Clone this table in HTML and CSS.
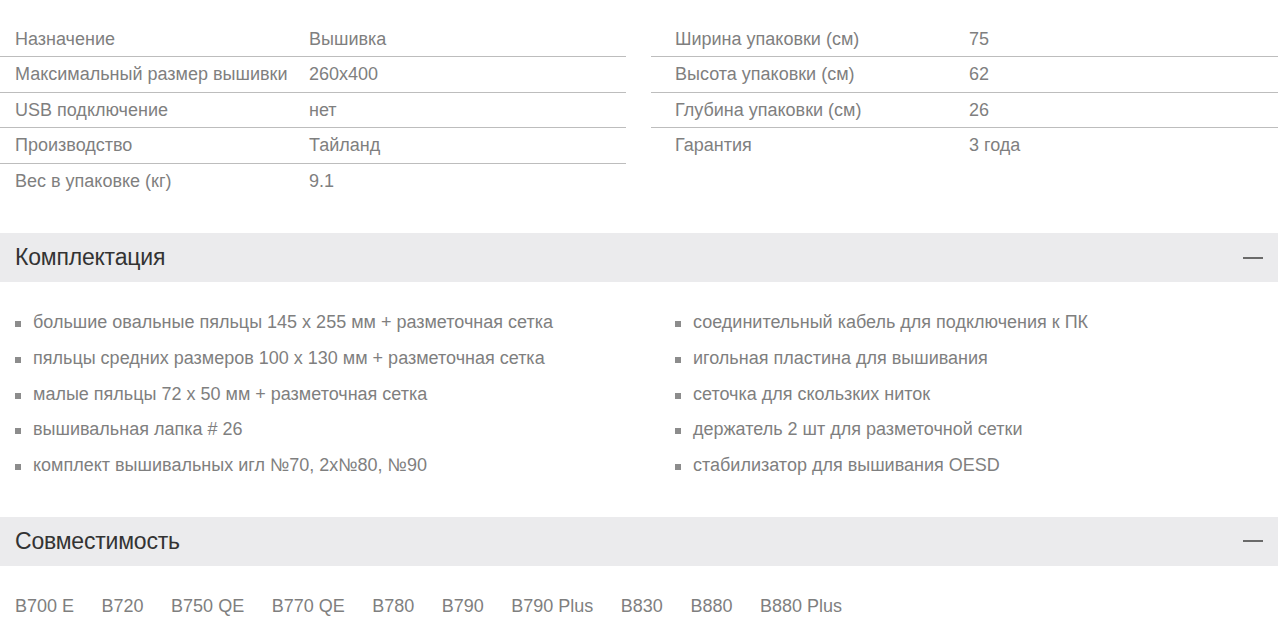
FILE: index.html
```html
<!DOCTYPE html>
<html lang="ru">
<head>
<meta charset="utf-8">
<title>Характеристики</title>
<link rel="stylesheet" href="styles.css">
</head>
<body>
<div class="specs">
  <div class="spec-table spec-left">
    <div class="row"><span class="label">Назначение</span><span class="value">Вышивка</span></div>
    <div class="row"><span class="label">Максимальный размер вышивки</span><span class="value">260x400</span></div>
    <div class="row"><span class="label">USB подключение</span><span class="value">нет</span></div>
    <div class="row"><span class="label">Производство</span><span class="value">Тайланд</span></div>
    <div class="row"><span class="label">Вес в упаковке (кг)</span><span class="value">9.1</span></div>
  </div>
  <div class="spec-table spec-right">
    <div class="row"><span class="label">Ширина упаковки (см)</span><span class="value">75</span></div>
    <div class="row"><span class="label">Высота упаковки (см)</span><span class="value">62</span></div>
    <div class="row"><span class="label">Глубина упаковки (см)</span><span class="value">26</span></div>
    <div class="row"><span class="label">Гарантия</span><span class="value">3 года</span></div>
  </div>
</div>

<div class="section-head section-kit">
  <h2 class="section-title">Комплектация</h2>
  <span class="collapse"></span>
</div>
<div class="kit">
  <ul class="kit-list">
    <li>большие овальные пяльцы 145 х 255 мм + разметочная сетка</li>
    <li>пяльцы средних размеров 100 х 130 мм + разметочная сетка</li>
    <li>малые пяльцы 72 х 50 мм + разметочная сетка</li>
    <li>вышивальная лапка # 26</li>
    <li>комплект вышивальных игл №70, 2х№80, №90</li>
  </ul>
  <ul class="kit-list">
    <li>соединительный кабель для подключения к ПК</li>
    <li>игольная пластина для вышивания</li>
    <li>сеточка для скользких ниток</li>
    <li>держатель 2 шт для разметочной сетки</li>
    <li>стабилизатор для вышивания OESD</li>
  </ul>
</div>

<div class="section-head section-compat">
  <h2 class="section-title">Совместимость</h2>
  <span class="collapse"></span>
</div>
<div class="compat">
  <span>B700 E</span>
  <span>B720</span>
  <span>B750 QE</span>
  <span>B770 QE</span>
  <span>B780</span>
  <span>B790</span>
  <span>B790 Plus</span>
  <span>B830</span>
  <span>B880</span>
  <span>B880 Plus</span>
</div>
</body>
</html>
```

FILE: styles.css
```css
html, body {
  margin: 0;
  padding: 0;
  background: #ffffff;
}

body {
  font-family: "Liberation Sans", Arial, sans-serif;
  font-size: 18px;
  color: #7f7f7f;
  padding-top: 22px;
}

.specs {
  display: grid;
  grid-template-columns: 626px 1fr;
  column-gap: 25px;
  align-items: start;
}

.row {
  display: flex;
  line-height: 34.4px;
  border-bottom: 1px solid #bdbdbd;
}

.spec-left .row:last-child,
.spec-right .row:last-child {
  border-bottom: none;
}

.spec-left .label {
  padding-left: 15px;
  width: 294px;
  flex: none;
}

.spec-right .label {
  padding-left: 24px;
  width: 294px;
  flex: none;
}

.value {
  flex: 1;
}

.section-head {
  display: flex;
  align-items: center;
  justify-content: space-between;
  background: #ebebed;
  height: 49px;
  padding: 0 15px;
}

.section-kit {
  margin-top: 35px;
}

.section-compat {
  margin-top: 33px;
}

.section-title {
  margin: 0;
  font-weight: normal;
  font-size: 23px;
  color: #333333;
  letter-spacing: -0.2px;
}

.collapse {
  display: block;
  width: 20px;
  height: 0;
  border-top: 2px solid #6a6a6a;
}

.kit {
  display: grid;
  grid-template-columns: 660px 1fr;
  padding-top: 23px;
}

.kit-list {
  list-style: none;
  margin: 0;
  padding: 0 0 0 15px;
}

.kit-list li {
  position: relative;
  line-height: 35.75px;
  padding-left: 18px;
}

.kit-list li::before {
  content: "";
  position: absolute;
  left: 0;
  top: 16px;
  width: 6px;
  height: 6px;
  background: #8c8c8c;
}

.compat {
  display: flex;
  gap: 27.5px;
  padding: 23px 15px 0;
  line-height: 35px;
}
```
